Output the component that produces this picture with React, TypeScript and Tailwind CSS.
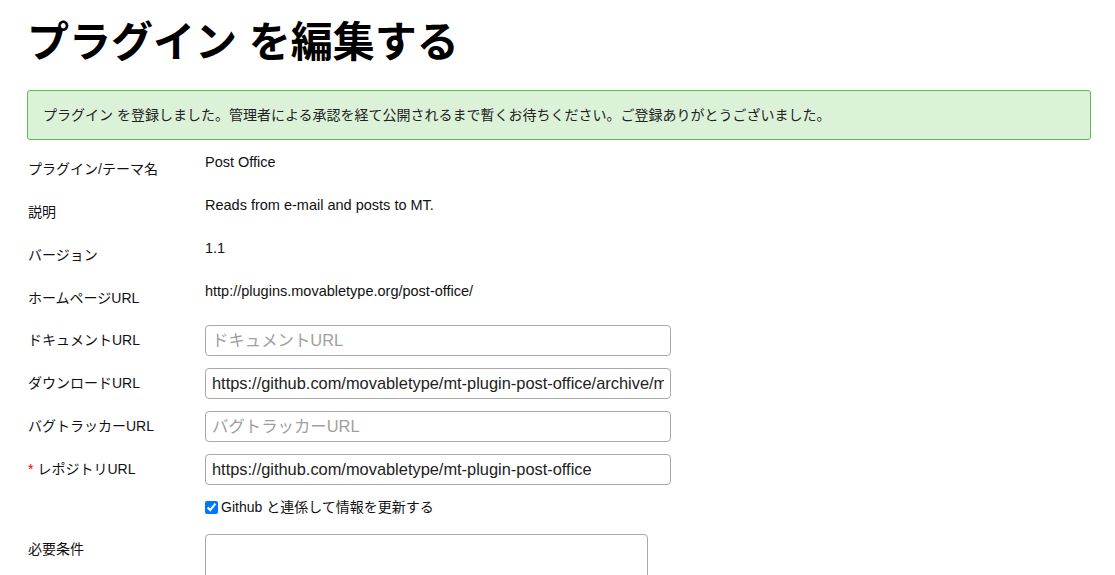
const font = { fontFamily: '"Liberation Sans", "Noto Sans CJK JP", sans-serif' };

function TextRow({ label, value }: { label: string; value: string }) {
  return (
    <div className="flex h-[43px] items-start">
      <div className="w-[177px] pt-[7px] text-[14px] leading-[18px] text-[#111]">{label}</div>
      <div className="text-[14.5px] leading-[18px] text-[#111]">{value}</div>
    </div>
  );
}

function InputRow({
  label,
  value,
  placeholder,
  required,
}: {
  label: string;
  value?: string;
  placeholder?: string;
  required?: boolean;
}) {
  return (
    <div className="mb-[12px] flex h-[31px] items-center">
      <label className="w-[177px] pb-[1px] text-[14px] leading-[18px] text-[#111]">
        {required && <span className="mr-[4px] text-[#d00]">*</span>}
        {label}
      </label>
      <input
        type="text"
        defaultValue={value}
        placeholder={placeholder}
        className="h-[31px] w-[466px] rounded-[4px] border border-[#a9a9a9] bg-white px-[6px] text-[16.4px] text-[#222] placeholder:text-[#a0a0a0] focus:outline-none"
      />
    </div>
  );
}

export default function App() {
  return (
    <div className="min-h-[575px] bg-white px-[27px] pt-[19px]" style={font}>
      <h1 className="mb-[23px] text-[42px] font-bold leading-[48px] text-black">プラグイン を編集する</h1>

      <div className="mb-[13px] flex h-[50px] w-[1064px] items-center rounded-[3px] border border-[#5cbf4f] bg-[#dcf2d8] px-[15px] text-[14px] text-[#222]">
        プラグイン を登録しました。管理者による承認を経て公開されるまで暫くお待ちください。ご登録ありがとうございました。
      </div>

      <div className="pl-[1px]">
        <TextRow label="プラグイン/テーマ名" value="Post Office" />
        <TextRow label="説明" value="Reads from e-mail and posts to MT." />
        <TextRow label="バージョン" value="1.1" />
        <TextRow label="ホームページURL" value="http://plugins.movabletype.org/post-office/" />

        <InputRow label="ドキュメントURL" placeholder="ドキュメントURL" />
        <InputRow label="ダウンロードURL" value="https://github.com/movabletype/mt-plugin-post-office/archive/master.zip" />
        <InputRow label="バグトラッカーURL" placeholder="バグトラッカーURL" />
        <InputRow label="レポジトリURL" value="https://github.com/movabletype/mt-plugin-post-office" required />

        <div className="mb-[17px] flex h-[20px] items-center pl-[177px]">
          <label className="flex items-center gap-[3px] text-[14px] text-[#111]">
            <input type="checkbox" defaultChecked className="m-0 h-[13px] w-[13px]" />
            Github と連係して情報を更新する
          </label>
        </div>

        <div className="flex items-start">
          <div className="w-[177px] pt-[6px] text-[14px] leading-[18px] text-[#111]">必要条件</div>
          <textarea className="h-[80px] w-[443px] resize-none rounded-[4px] border border-[#a9a9a9] bg-white focus:outline-none" />
        </div>
      </div>
    </div>
  );
}
